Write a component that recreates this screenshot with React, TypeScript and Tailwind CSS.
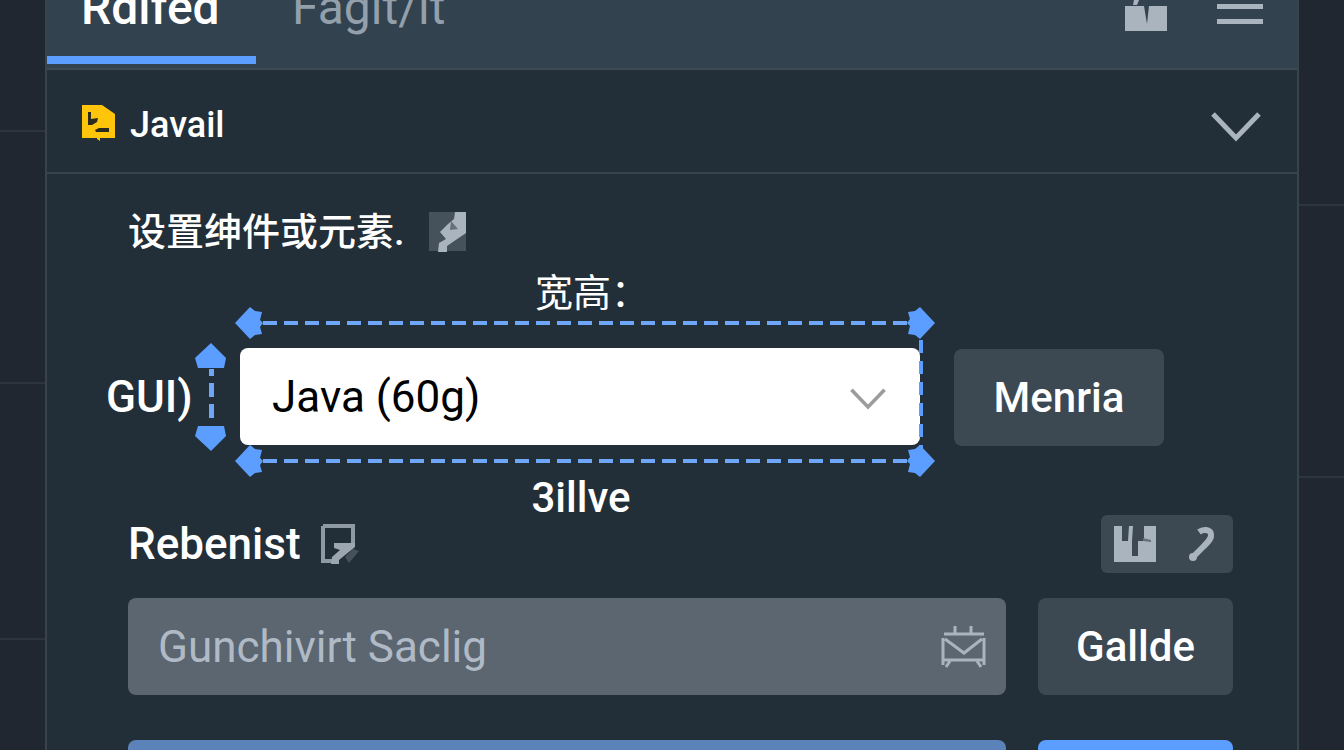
import type { ReactNode } from 'react'

const latin = "font-['Roboto','Noto_Sans_CJK_SC',sans-serif]"

function Chevron({ className }: { className: string }) {
  return (
    <svg className={className} viewBox="0 0 50 30" fill="none" stroke="currentColor" strokeWidth="5">
      <path d="M2 2 L25 26 L48 2" />
    </svg>
  )
}

function FileIcon() {
  return (
    <svg className="w-[34px] h-9 shrink-0" viewBox="0 0 34 36">
      <path d="M0 0h20l13 9v24H18v3l-3-2v-1H0z" fill="#ffc50a" />
      <path d="M6 7h3v7l7-1-1 4-5 3H6z M13 25l4-2h10v4H14z" fill="#2b2a1c" />
    </svg>
  )
}

function BoxIcon() {
  return (
    <svg className="w-[42px] h-9" viewBox="0 0 42 36">
      <path d="M0 0h8v15h6l1-15h4l-1 15v15h6V15h6V0h12v36H0z" fill="#aab4bf" />
      <path d="M29 12l8 2v2l-8-1z" fill="#65717a" />
    </svg>
  )
}

function GiftIcon() {
  return (
    <svg className="w-[42px] h-[31px]" viewBox="0 0 42 31">
      <path d="M9 0h5l-2 5H8z M0 6h19l3 18 2-18h18v25H0z" fill="#aab4bf" />
    </svg>
  )
}

function HeadIcon({ className }: { className: string }) {
  return (
    <svg className={className} viewBox="0 0 28 32">
      <path d="M0 16 L15 0 L20 4 L27 5 L25 13 L28 16 L25 20 L27 27 L20 28 L15 32z" fill="#5b9eff" />
    </svg>
  )
}

function WidthArrow() {
  return (
    <div className="flex items-center h-8">
      <HeadIcon className="w-7 h-8 shrink-0" />
      <div className="grow h-1 bg-[repeating-linear-gradient(90deg,#6ea7f8_0_14px,transparent_14px_21px)]" />
      <HeadIcon className="w-7 h-8 shrink-0 rotate-180" />
    </div>
  )
}

function HeightArrow() {
  return (
    <div className="flex flex-col items-center w-8 h-[108px]">
      <svg className="w-8 h-[26px] shrink-0" viewBox="0 0 32 26">
        <path d="M16 0 L31 15 L29 25 H3 L0 15z" fill="#5b9eff" />
      </svg>
      <div className="grow w-[5px] bg-[repeating-linear-gradient(180deg,#6ea7f8_0_7px,transparent_7px_14px,#6ea7f8_14px_21px)]" />
      <svg className="w-8 h-[26px] shrink-0" viewBox="0 0 32 26">
        <path d="M16 26 L31 11 L29 1 H3 L0 11z" fill="#5b9eff" />
      </svg>
    </div>
  )
}

function GreyButton({ className, children }: { className: string, children: ReactNode }) {
  return (
    <button className={`h-[97px] shrink-0 rounded-lg bg-[#3c4852] text-[42px] font-medium text-white ${className}`}>
      {children}
    </button>
  )
}

function Gutter({ cells }: { cells: string[] }) {
  return (
    <div className="w-[45px] shrink-0">
      {cells.map((height, i) => (
        <div key={i} className={`border-b-2 border-[#2c353f] ${height}`} />
      ))}
    </div>
  )
}

function App() {
  return (
    <div className={`flex h-screen overflow-hidden bg-[#202731] text-white ${latin}`}>
      <Gutter cells={['h-[132px]', 'h-[252px]', 'h-[256px]']} />

      <main className="grow min-w-0 border-x-2 border-[#37444d] bg-[#232f38]">
        <header className="flex justify-between h-[70px] overflow-hidden border-b-2 border-[#3d4a53] bg-[#32424f]">
          <nav className="flex items-end text-[48px] leading-[48px]">
            <a href="#" className="w-[209px] pl-[34px] pb-6 mb-1 border-b-8 border-[#5b9eff] font-medium">Rdlfed</a>
            <a href="#" className="pl-9 pb-9 text-[#93a0ab]">Fagit/lt</a>
          </nav>
          <div className="flex items-start gap-[50px] pr-[34px]">
            <button aria-label="Box">
              <GiftIcon />
            </button>
            <button aria-label="Menu" className="flex flex-col gap-[10px] pt-1">
              <span className="w-[46px] h-[5px] bg-[#aab4bf]" />
              <span className="w-[46px] h-[5px] bg-[#aab4bf]" />
            </button>
          </div>
        </header>

        <button className="flex items-center w-full h-[104px] pt-1 pl-[35px] pr-9 border-b-2 border-[#37444d]">
          <FileIcon />
          <span className="grow pt-1 pl-[14px] text-left text-[36px] font-medium">Javail</span>
          <Chevron className="w-[50px] h-[30px] mt-2 text-[#aab4bf]" />
        </button>

        <section className="pt-[34px]">
          <div className="flex items-center gap-6 h-12 pl-[81px]">
            <h2 className="text-[38px] leading-[48px] font-medium">设置绅件或元素.</h2>
            <svg className="w-[38px] h-10" viewBox="0 0 38 40">
              <path d="M0 0h37v39H0z" fill="#45525b" />
              <path d="M26 0h11v21L18 34v6h-9l1-9 7-4-6-7 8-8 6-5z" fill="#aab4bf" />
              <path d="M22 9l7 8-8 1z" fill="#65717a" />
            </svg>
          </div>

          <div className="flex items-center pt-[23px] pl-[59px] pr-[133px]">
            <label htmlFor="gui" className="w-[89px] shrink-0 text-[44px] font-medium">GUI)</label>
            <HeightArrow />
            <div className="grow min-w-0 ml-2">
              <p className="pl-[14px] text-center text-[38px] leading-[28px]">宽高：</p>
              <WidthArrow />
              <div className="relative mt-[9px] ml-[5px] mr-[15px]">
                <select id="gui" className="block appearance-none w-full h-[97px] pl-8 rounded-lg bg-white text-[44px] text-black">
                  <option>Java (60g)</option>
                </select>
                <Chevron className="absolute right-[34px] top-10 w-9 h-[22px] text-[#9c9c9c] pointer-events-none" />
                <div className="absolute -right-[3px] -top-2 -bottom-1 w-1 bg-[repeating-linear-gradient(180deg,#5b9eff_0_13px,transparent_13px_21px)]" />
              </div>
              <WidthArrow />
              <p className="pt-1 pr-2 text-center text-[42px] leading-[34px] font-medium">3illve</p>
            </div>
            <GreyButton className="w-[210px] ml-[19px]">Menria</GreyButton>
          </div>

          <div className="flex items-center justify-between h-[58px] pl-[81px] pr-16">
            <div className="flex items-center gap-5">
              <label htmlFor="rebenist" className="text-[44px] leading-[58px] font-medium">Rebenist</label>
              <svg className="w-[38px] h-10" viewBox="0 0 38 40">
                <path d="M2 2h30v18M2 2v35h10" fill="none" stroke="#8e99a3" strokeWidth="4" />
                <path d="M24 33l8-8 6 2-10 12z" fill="#45525b" />
                <path d="M13 19h21v4L18 36v4h-8l1-7 8-7-6-2z" fill="#9ba6b0" />
              </svg>
            </div>
            <div className="flex items-center gap-8 h-[58px] w-[132px] pl-[13px] rounded-md bg-[#3c4852]">
              <button aria-label="Box">
                <BoxIcon />
              </button>
              <button aria-label="Help">
                <svg className="w-7 h-9" viewBox="0 0 28 36" fill="none" stroke="#aab4bf">
                  <path d="M11 6C15 3 22 3 23 8s-4 9-8 13L6 30" strokeWidth="6" />
                  <circle cx="5" cy="31" r="3" fill="#aab4bf" strokeWidth="2" />
                </svg>
              </button>
            </div>
          </div>

          <div className="flex gap-8 pt-[25px] pl-[81px] pr-16">
            <div className="relative grow">
              <input
                id="rebenist"
                placeholder="Gunchivirt Saclig"
                className="block w-full h-[97px] pl-[30px] rounded-lg bg-[#5b6670] text-[44px] placeholder:text-[#b0bac6]"
              />
              <svg className="absolute right-5 top-7 w-[45px] h-[42px]" viewBox="0 0 45 42" fill="none" stroke="#aab4bf" strokeWidth="3">
                <path d="M14 0v7M30 0v7M3 8h40M2 12v27M43 12v27M2 34h41M4 13l19 14 18-14" />
                <path d="M9 35l-4 6M36 35l4 6" />
              </svg>
            </div>
            <GreyButton className="w-[195px]">Gallde</GreyButton>
          </div>

          <div className="flex gap-8 pt-[45px] pl-[81px] pr-16">
            <button aria-label="Apply" className="grow h-[97px] rounded-lg bg-[#5b82b9]" />
            <button aria-label="Confirm" className="w-[195px] h-[97px] rounded-lg bg-[#5b9eff]" />
          </div>
        </section>
      </main>

      <Gutter cells={['h-[206px]', 'h-[272px]']} />
    </div>
  )
}

export default App
